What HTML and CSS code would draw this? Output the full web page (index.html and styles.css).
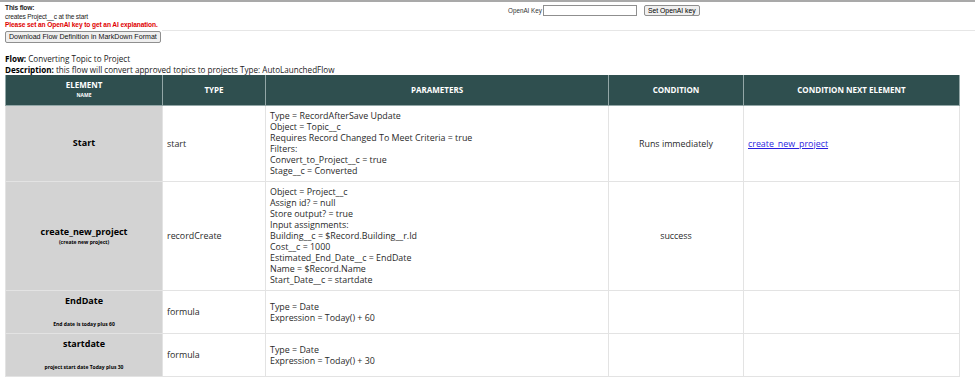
FILE: index.html
```html
<!DOCTYPE html>
<html>
<head>
<meta charset="utf-8">
<link rel="stylesheet" href="styles.css">
</head>
<body>
<div class="topbar">
  <div class="intro">
    <div class="intro-title">This flow:</div>
    <div class="intro-text">creates Project__c at the start</div>
    <div class="intro-warn">Please set an OpenAI key to get an AI explanation.</div>
    <button class="dl-btn">Download Flow Definition in MarkDown Format</button>
  </div>
  <div class="keybar">
    <label class="key-label">OpenAI Key</label>
    <input class="key-input" type="text">
    <button class="key-btn">Set OpenAI key</button>
  </div>
</div>
<div class="flowinfo">
  <div><b>Flow:</b> Converting Topic to Project</div>
  <div><b>Description:</b> this flow will convert approved topics to projects Type: AutoLaunchedFlow</div>
</div>
<table class="flow">
  <thead>
    <tr>
      <th class="c1">ELEMENT<div class="th-sub">NAME</div></th>
      <th class="c2">TYPE</th>
      <th class="c3">PARAMETERS</th>
      <th class="c4">CONDITION</th>
      <th class="c5">CONDITION NEXT ELEMENT</th>
    </tr>
  </thead>
  <tbody>
    <tr class="r1">
      <td class="name"><div class="nm">Start</div></td>
      <td>start</td>
      <td>Type = RecordAfterSave Update<br>Object = Topic__c<br>Requires Record Changed To Meet Criteria = true<br>Filters:<br>Convert_to_Project__c = true<br>Stage__c = Converted</td>
      <td class="cond">Runs immediately</td>
      <td><a href="#">create_new_project</a></td>
    </tr>
    <tr class="r2">
      <td class="name"><div class="nm">create_new_project</div><div class="sub sub-tight">(create new project)</div></td>
      <td>recordCreate</td>
      <td>Object = Project__c<br>Assign id? = null<br>Store output? = true<br>Input assignments:<br>Building__c = $Record.Building__r.Id<br>Cost__c = 1000<br>Estimated_End_Date__c = EndDate<br>Name = $Record.Name<br>Start_Date__c = startdate</td>
      <td class="cond">success</td>
      <td></td>
    </tr>
    <tr class="r3">
      <td class="name"><div class="nm">EndDate</div><div class="sub sub-gap">End date is today plus 60</div></td>
      <td>formula</td>
      <td>Type = Date<br>Expression = Today() + 60</td>
      <td class="cond"></td>
      <td></td>
    </tr>
    <tr class="r4">
      <td class="name"><div class="nm">startdate</div><div class="sub sub-gap">project start date Today plus 30</div></td>
      <td>formula</td>
      <td>Type = Date<br>Expression = Today() + 30</td>
      <td class="cond"></td>
      <td></td>
    </tr>
  </tbody>
</table>
</body>
</html>
```
FILE: styles.css
```css
html, body {
  margin: 0;
  padding: 0;
  background: #ffffff;
}
body {
  font-family: "Open Sans", "Noto Sans", sans-serif;
  color: #222;
  border-top: 2px solid #a9a9a9;
}
.topbar {
  display: flex;
  align-items: flex-start;
}
.intro {
  width: 157px;
  padding-left: 5px;
  padding-top: 2px;
  font-family: "Liberation Sans", Arial, sans-serif;
  font-size: 6.6px;
  letter-spacing: -0.15px;
  line-height: 8.5px;
  flex-shrink: 0;
}
.intro-title { font-weight: bold; }
.intro-warn { color: #e00000; font-weight: bold; letter-spacing: -0.1px; }
.dl-btn {
  display: block;
  margin: 1px 0 0 0;
  padding: 0 3px;
  height: 12px;
  font-family: "Liberation Sans", Arial, sans-serif;
  font-size: 7.1px;
  letter-spacing: 0;
  line-height: 10px;
  color: #111;
  background: #efefef;
  border: 1px solid #8f8f8f;
  border-radius: 2px;
  white-space: nowrap;
}
.keybar {
  flex: 1;
  height: 29px;
  border-bottom: 1px solid #e6e6e6;
  display: flex;
  align-items: flex-start;
  padding-top: 3px;
  padding-left: 346px;
  font-family: "Liberation Sans", Arial, sans-serif;
  font-size: 6.3px;
  box-sizing: border-box;
}
.key-label {
  line-height: 11px;
  margin-right: 1px;
  color: #333;
}
.key-input {
  width: 94px;
  height: 11px;
  box-sizing: border-box;
  border: 1px solid #8f8f8f;
  padding: 0;
  margin: 0 7px 0 0;
}
.key-btn {
  height: 11px;
  padding: 0 3px;
  font-family: "Liberation Sans", Arial, sans-serif;
  font-size: 6.8px;
  line-height: 9px;
  background: #efefef;
  border: 1px solid #8f8f8f;
  border-radius: 2px;
  margin: 0;
}
.flowinfo {
  padding: 10px 0 0 5px;
  font-size: 8.1px;
  line-height: 11px;
  color: #222;
}
.flowinfo b { color: #000; }
table.flow {
  margin-left: 5px;
  width: 955px;
  border-collapse: collapse;
  font-size: 8.9px;
  line-height: 11px;
  color: #2a2a2a;
}
table.flow th {
  background: #2f4f4f;
  color: #fff;
  font-size: 8px;
  font-weight: bold;
  height: 30px;
  padding: 0 4px;
  border: 1px solid #93a7a7;
  border-top: none;
  line-height: 10px;
}
.th-sub { font-size: 5px; line-height: 8px; margin-top: 1px; }
.c1 { width: 148px; }
.c2 { width: 94px; }
.c3 { width: 334px; }
.c4 { width: 126px; }
table.flow td {
  border: 1px solid #e3e3e3;
  padding: 4px 4px;
  vertical-align: middle;
  text-align: left;
}
table.flow td.name {
  background: #d3d3d3;
  text-align: center;
  color: #000;
}
.nm { font-weight: bold; font-size: 9px; line-height: 12px; }
.sub { font-size: 5px; font-weight: bold; line-height: 8px; }
.sub-gap { margin-top: 13px; }
table.flow td.cond { text-align: center; }
.r1 td { height: 67px; }
.r2 td { height: 100px; }
.r3 td { height: 34px; }
.r4 td { height: 34px; }
a { color: #2a1ee0; }
```
